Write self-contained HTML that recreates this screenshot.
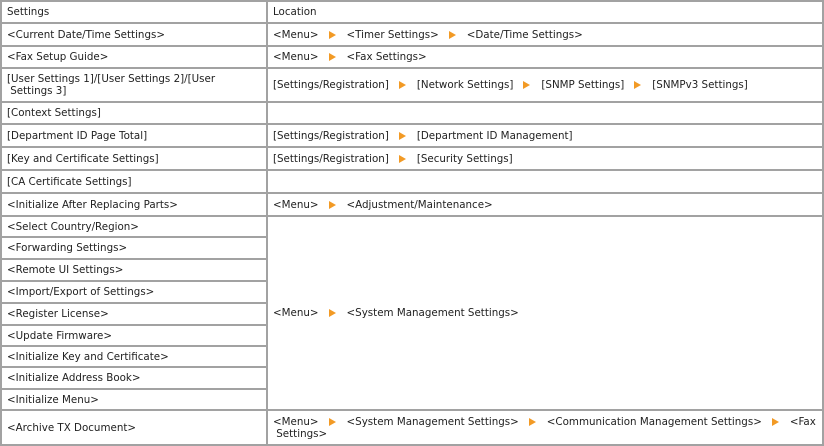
<!DOCTYPE html>
<html><head><meta charset="utf-8"><style>
body{margin:0;width:824px;height:446px;background:#fff;position:relative;overflow:hidden;font-family:"DejaVu Sans","Liberation Sans",sans-serif;font-size:10.3px;color:#222}
.h{position:absolute;height:2px;background:#a2a2a2}
.v{position:absolute;width:2px;background:#a2a2a2}
.c{position:absolute;display:flex;align-items:center;padding-left:7px;box-sizing:border-box;line-height:12px;white-space:nowrap}
.a{display:inline-block;width:0;height:0;border-top:4.5px solid transparent;border-bottom:4.5px solid transparent;border-left:7px solid #f29a25;margin:0 11px 0 10px;vertical-align:-1px}
</style></head><body>
<div class="v" style="left:0;top:0;height:446px"></div>
<div class="v" style="left:266px;top:0;height:446px"></div>
<div class="v" style="left:822px;top:0;height:446px"></div>
<div class="h" style="left:0;width:824px;top:0"></div>
<div class="h" style="left:0;width:824px;top:22px"></div>
<div class="h" style="left:0;width:824px;top:45px"></div>
<div class="h" style="left:0;width:824px;top:67px"></div>
<div class="h" style="left:0;width:824px;top:101px"></div>
<div class="h" style="left:0;width:824px;top:123px"></div>
<div class="h" style="left:0;width:824px;top:146px"></div>
<div class="h" style="left:0;width:824px;top:169px"></div>
<div class="h" style="left:0;width:824px;top:192px"></div>
<div class="h" style="left:0;width:824px;top:215px"></div>
<div class="h" style="left:0;width:267px;top:236px"></div>
<div class="h" style="left:0;width:267px;top:258px"></div>
<div class="h" style="left:0;width:267px;top:280px"></div>
<div class="h" style="left:0;width:267px;top:302px"></div>
<div class="h" style="left:0;width:267px;top:324px"></div>
<div class="h" style="left:0;width:267px;top:345px"></div>
<div class="h" style="left:0;width:267px;top:366px"></div>
<div class="h" style="left:0;width:267px;top:388px"></div>
<div class="h" style="left:0;width:824px;top:409px"></div>
<div class="h" style="left:0;width:824px;top:444px"></div>

<div class="c" style="left:0;top:2px;height:20px">Settings</div>
<div class="c" style="left:266px;top:2px;height:20px">Location</div>
<div class="c" style="left:0;top:24px;height:21px">&lt;Current Date/Time Settings&gt;</div>
<div class="c" style="left:266px;top:24px;height:21px">&lt;Menu&gt;<span class="a"></span>&lt;Timer Settings&gt;<span class="a"></span>&lt;Date/Time Settings&gt;</div>
<div class="c" style="left:0;top:47px;height:20px">&lt;Fax Setup Guide&gt;</div>
<div class="c" style="left:266px;top:47px;height:20px">&lt;Menu&gt;<span class="a"></span>&lt;Fax Settings&gt;</div>
<div class="c" style="left:0;top:69px;height:32px;white-space:normal">[User Settings 1]/[User Settings 2]/[User<br>&nbsp;Settings 3]</div>
<div class="c" style="left:266px;top:69px;height:32px">[Settings/Registration]<span class="a"></span>[Network Settings]<span class="a"></span>[SNMP Settings]<span class="a"></span>[SNMPv3 Settings]</div>
<div class="c" style="left:0;top:103px;height:20px">[Context Settings]</div>
<div class="c" style="left:0;top:125px;height:21px">[Department ID Page Total]</div>
<div class="c" style="left:266px;top:125px;height:21px">[Settings/Registration]<span class="a"></span>[Department ID Management]</div>
<div class="c" style="left:0;top:148px;height:21px">[Key and Certificate Settings]</div>
<div class="c" style="left:266px;top:148px;height:21px">[Settings/Registration]<span class="a"></span>[Security Settings]</div>
<div class="c" style="left:0;top:171px;height:21px">[CA Certificate Settings]</div>
<div class="c" style="left:0;top:194px;height:21px">&lt;Initialize After Replacing Parts&gt;</div>
<div class="c" style="left:266px;top:194px;height:21px">&lt;Menu&gt;<span class="a"></span>&lt;Adjustment/Maintenance&gt;</div>
<div class="c" style="left:0;top:217px;height:19px">&lt;Select Country/Region&gt;</div>
<div class="c" style="left:0;top:238px;height:20px">&lt;Forwarding Settings&gt;</div>
<div class="c" style="left:0;top:260px;height:20px">&lt;Remote UI Settings&gt;</div>
<div class="c" style="left:0;top:282px;height:20px">&lt;Import/Export of Settings&gt;</div>
<div class="c" style="left:0;top:304px;height:20px">&lt;Register License&gt;</div>
<div class="c" style="left:0;top:326px;height:19px">&lt;Update Firmware&gt;</div>
<div class="c" style="left:0;top:347px;height:19px">&lt;Initialize Key and Certificate&gt;</div>
<div class="c" style="left:0;top:368px;height:20px">&lt;Initialize Address Book&gt;</div>
<div class="c" style="left:0;top:390px;height:19px">&lt;Initialize Menu&gt;</div>
<div class="c" style="left:266px;top:217px;height:192px">&lt;Menu&gt;<span class="a"></span>&lt;System Management Settings&gt;</div>
<div class="c" style="left:0;top:411px;height:33px">&lt;Archive TX Document&gt;</div>
<div class="c" style="left:266px;top:411px;height:33px;white-space:normal;display:block;padding-top:5px">&lt;Menu&gt;<span class="a"></span>&lt;System Management Settings&gt;<span class="a"></span>&lt;Communication Management Settings&gt;<span class="a"></span>&lt;Fax<br>&nbsp;Settings&gt;</div>
</body></html>
